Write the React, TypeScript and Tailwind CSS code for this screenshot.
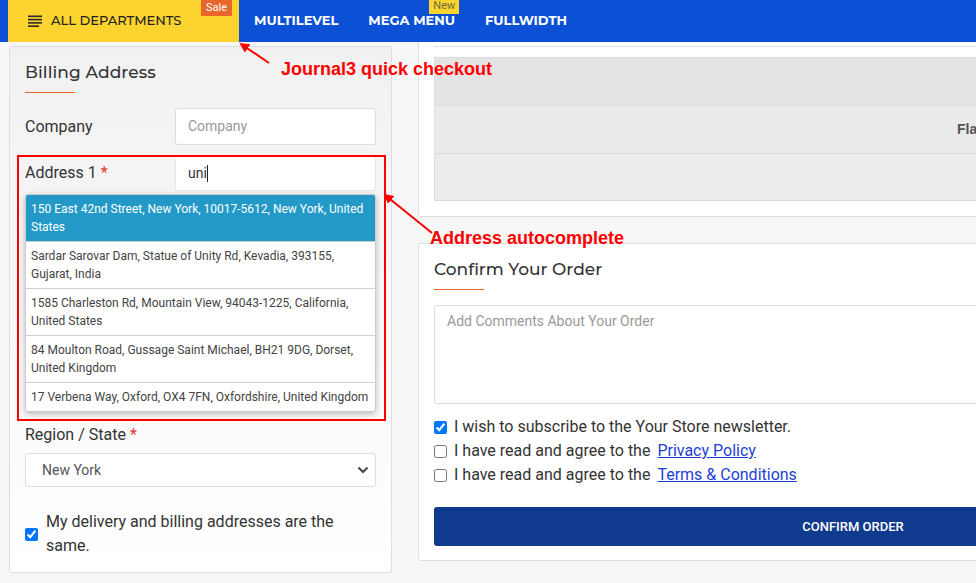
import React from 'react';

const suggestions = [
  '150 East 42nd Street, New York, 10017-5612, New York, United States',
  'Sardar Sarovar Dam, Statue of Unity Rd, Kevadia, 393155, Gujarat, India',
  '1585 Charleston Rd, Mountain View, 94043-1225, California, United States',
  '84 Moulton Road, Gussage Saint Michael, BH21 9DG, Dorset, United Kingdom',
  '17 Verbena Way, Oxford, OX4 7FN, Oxfordshire, United Kingdom',
];

const heading = "font-['Montserrat','Open_Sans',sans-serif]";
const body = "font-['Roboto',sans-serif]";

const Star = () => <span className="text-[#e3342f] ml-1">*</span>;

const App: React.FC = () => {
  return (
    <div className={`relative w-[976px] h-[583px] overflow-hidden bg-[#f7f7f7] ${body}`}>
      {/* top menu */}
      <div className="h-[42px] bg-[#0c50d6] flex items-stretch pl-[8px]">
        <div className="relative w-[231px] bg-[#fdd42f] flex items-center pl-[20px]">
          <svg width="15" height="12" viewBox="0 0 15 12" className="mr-[8px]">
            <rect x="0" y="0.5" width="14" height="1.6" fill="#2a2a2a" />
            <rect x="0" y="3.8" width="14" height="1.6" fill="#2a2a2a" />
            <rect x="0" y="7.1" width="14" height="1.6" fill="#2a2a2a" />
            <rect x="0" y="10.4" width="11" height="1.6" fill="#2a2a2a" />
          </svg>
          <span className={`${heading} text-[13px] font-medium text-[#222]`}>ALL DEPARTMENTS</span>
          <span className="absolute top-0 left-[193px] h-[16px] px-[5px] bg-[#e8662b] text-white text-[11px] leading-[16px]">Sale</span>
        </div>
        <div className={`${heading} flex items-center text-white text-[13px] font-bold`}>
          <span className="ml-[15px]">MULTILEVEL</span>
          <span className="relative ml-[30px]">
            MEGA MENU
            <span className={`${body} absolute -top-[13px] left-[61px] h-[16px] px-[4px] bg-[#fdd42f] text-[#6b6b3a] text-[11px] font-normal leading-[16px]`}>New</span>
          </span>
          <span className="ml-[30px]">FULLWIDTH</span>
        </div>
      </div>

      <div className="flex items-start pl-[9px]">
        {/* billing address */}
        <div className="mt-[4px] w-[383px] shrink-0 rounded-[3px] border border-[#dedede] bg-gradient-to-b from-[#f1f1f1] to-white px-[15px] pt-[13px] pb-[14px]">
          <h2 className={`${heading} text-[17px] leading-[24px] font-medium text-[#333] tracking-[0.1px]`}>Billing Address</h2>
          <div className="mt-[8px] h-px w-[50px] bg-[#e8662b]" />

          <div className="mt-[15px] flex items-center h-[37px]">
            <label className="w-[150px] text-[16px] text-[#333]">Company</label>
            <div className="flex-1 h-[37px] rounded-[3px] border border-[#dddddd] bg-white px-[12px] flex items-center text-[14px] text-[#999]">Company</div>
          </div>

          <div className="mt-[10px] flex items-center h-[36px]">
            <label className="w-[150px] text-[16px] text-[#333]">Address 1<Star /></label>
            <div className="flex-1 h-[36px] rounded-[3px] border border-[#e6e6e6] bg-white px-[12px] flex items-center text-[14px] text-[#333]">
              uni<span className="inline-block w-px h-[17px] bg-[#222]" />
            </div>
          </div>

          <div className="mt-[3px] w-[351px] rounded-[3px] border border-[#cccccc] bg-white shadow-[0_2px_6px_rgba(0,0,0,0.25)] overflow-hidden">
            {suggestions.map((s, i) => (
              <div
                key={s}
                className={`px-[5px] py-[5px] text-[12px] leading-[18px] ${i < suggestions.length - 1 ? 'border-b border-[#cfcfcf]' : ''} ${i === 0 ? 'bg-[#2399c8] text-white' : 'text-[#444]'}`}
              >
                {s}
              </div>
            ))}
          </div>

          <div className="mt-[11px] text-[16px] leading-[24px] text-[#333]">Region / State<Star /></div>
          <div className="relative mt-[6px] h-[34px]">
            <select defaultValue="ny" className="w-full h-[34px] appearance-none rounded-[3px] border border-[#dddddd] bg-white pl-[16px] text-[14px] text-[#555] outline-none">
              <option value="ny">New York</option>
            </select>
            <svg width="12" height="8" viewBox="0 0 12 8" className="absolute right-[7px] top-[13px] pointer-events-none">
              <path d="M1.5 1.5 L6 6 L10.5 1.5" fill="none" stroke="#444" strokeWidth="2" />
            </svg>
          </div>

          <div className="mt-[23px] flex items-center">
            <input type="checkbox" defaultChecked className="w-[13px] h-[13px] m-0 mr-[8px] shrink-0" />
            <span className="w-[320px] text-[16px] leading-[24px] text-[#333]">My delivery and billing addresses are the same.</span>
          </div>
        </div>

        {/* right column */}
        <div className="ml-[26px] w-[870px] shrink-0">
          <div className="border-x border-b border-[#dedede] bg-white px-[15px] pb-[15px] rounded-b-[3px]">
            <div className="h-[5px] border-b border-[#dddddd]" />
            <div className="mt-[10px] border border-[#dcdcdc]">
              <div className="h-[48px] bg-[#e4e4e4] border-b border-[#dcdcdc]" />
              <div className="h-[48px] bg-[#eaeaea] border-b border-[#dcdcdc] flex items-center pl-[522px] font-['Liberation_Sans',sans-serif] font-bold text-[14px] text-[#555] whitespace-nowrap">Flat Shipping Rate</div>
              <div className="h-[46px] bg-[#ececec]" />
            </div>
          </div>

          <div className="mt-[26px] rounded-[3px] border border-[#dedede] bg-white px-[15px] pt-[13px] pb-[14px]">
            <h2 className={`${heading} text-[17px] leading-[24px] font-medium text-[#333]`}>Confirm Your Order</h2>
            <div className="mt-[8px] h-px w-[50px] bg-[#e8662b]" />
            <textarea
              placeholder="Add Comments About Your Order"
              className="mt-[15px] block w-full h-[99px] resize-none rounded-[3px] border border-[#dddddd] px-[12px] py-[5px] text-[14px] text-[#333] placeholder:text-[#999] outline-none"
            />
            <div className="mt-[11px] text-[16px] leading-[24px] text-[#333]">
              <label className="flex items-center">
                <input type="checkbox" defaultChecked className="w-[13px] h-[13px] m-0 mr-[7px]" />
                I wish to subscribe to the Your Store newsletter.
              </label>
              <label className="flex items-center">
                <input type="checkbox" className="w-[13px] h-[13px] m-0 mr-[7px]" />
                I have read and agree to the&nbsp;
                <a href="#" className="ml-[3px] text-[#1d3fd6] underline">Privacy Policy</a>
              </label>
              <label className="flex items-center">
                <input type="checkbox" className="w-[13px] h-[13px] m-0 mr-[7px]" />
                I have read and agree to the&nbsp;
                <a href="#" className="ml-[3px] text-[#1d3fd6] underline">Terms &amp; Conditions</a>
              </label>
            </div>
            <button className="mt-[20px] w-full h-[39px] rounded-[3px] bg-[#103a8d] text-white text-[13px] font-medium">CONFIRM ORDER</button>
          </div>
        </div>
      </div>

      {/* screenshot annotations */}
      <div className="absolute left-[17px] top-[155px] w-[369px] h-[266px] border-2 border-[#ff0000] pointer-events-none" />
      <svg className="absolute left-0 top-0 pointer-events-none" width="976" height="583">
        <defs>
          <marker id="ah" markerWidth="10" markerHeight="10" refX="8" refY="5" orient="auto" markerUnits="userSpaceOnUse">
            <path d="M0 0 L10 5 L0 10 z" fill="#ff0000" />
          </marker>
        </defs>
        <line x1="269" y1="63" x2="241" y2="44" stroke="#ff0000" strokeWidth="2" markerEnd="url(#ah)" />
        <line x1="432" y1="233" x2="385" y2="195" stroke="#ff0000" strokeWidth="2" markerEnd="url(#ah)" />
      </svg>
      <div className="absolute left-[281px] top-[58px] font-['Liberation_Sans',sans-serif] font-bold text-[18px] leading-[22px] text-[#ff0000]">Journal3 quick checkout</div>
      <div className="absolute left-[430px] top-[227px] font-['Liberation_Sans',sans-serif] font-bold text-[18px] leading-[22px] text-[#ff0000]">Address autocomplete</div>
    </div>
  );
};

export default App;
